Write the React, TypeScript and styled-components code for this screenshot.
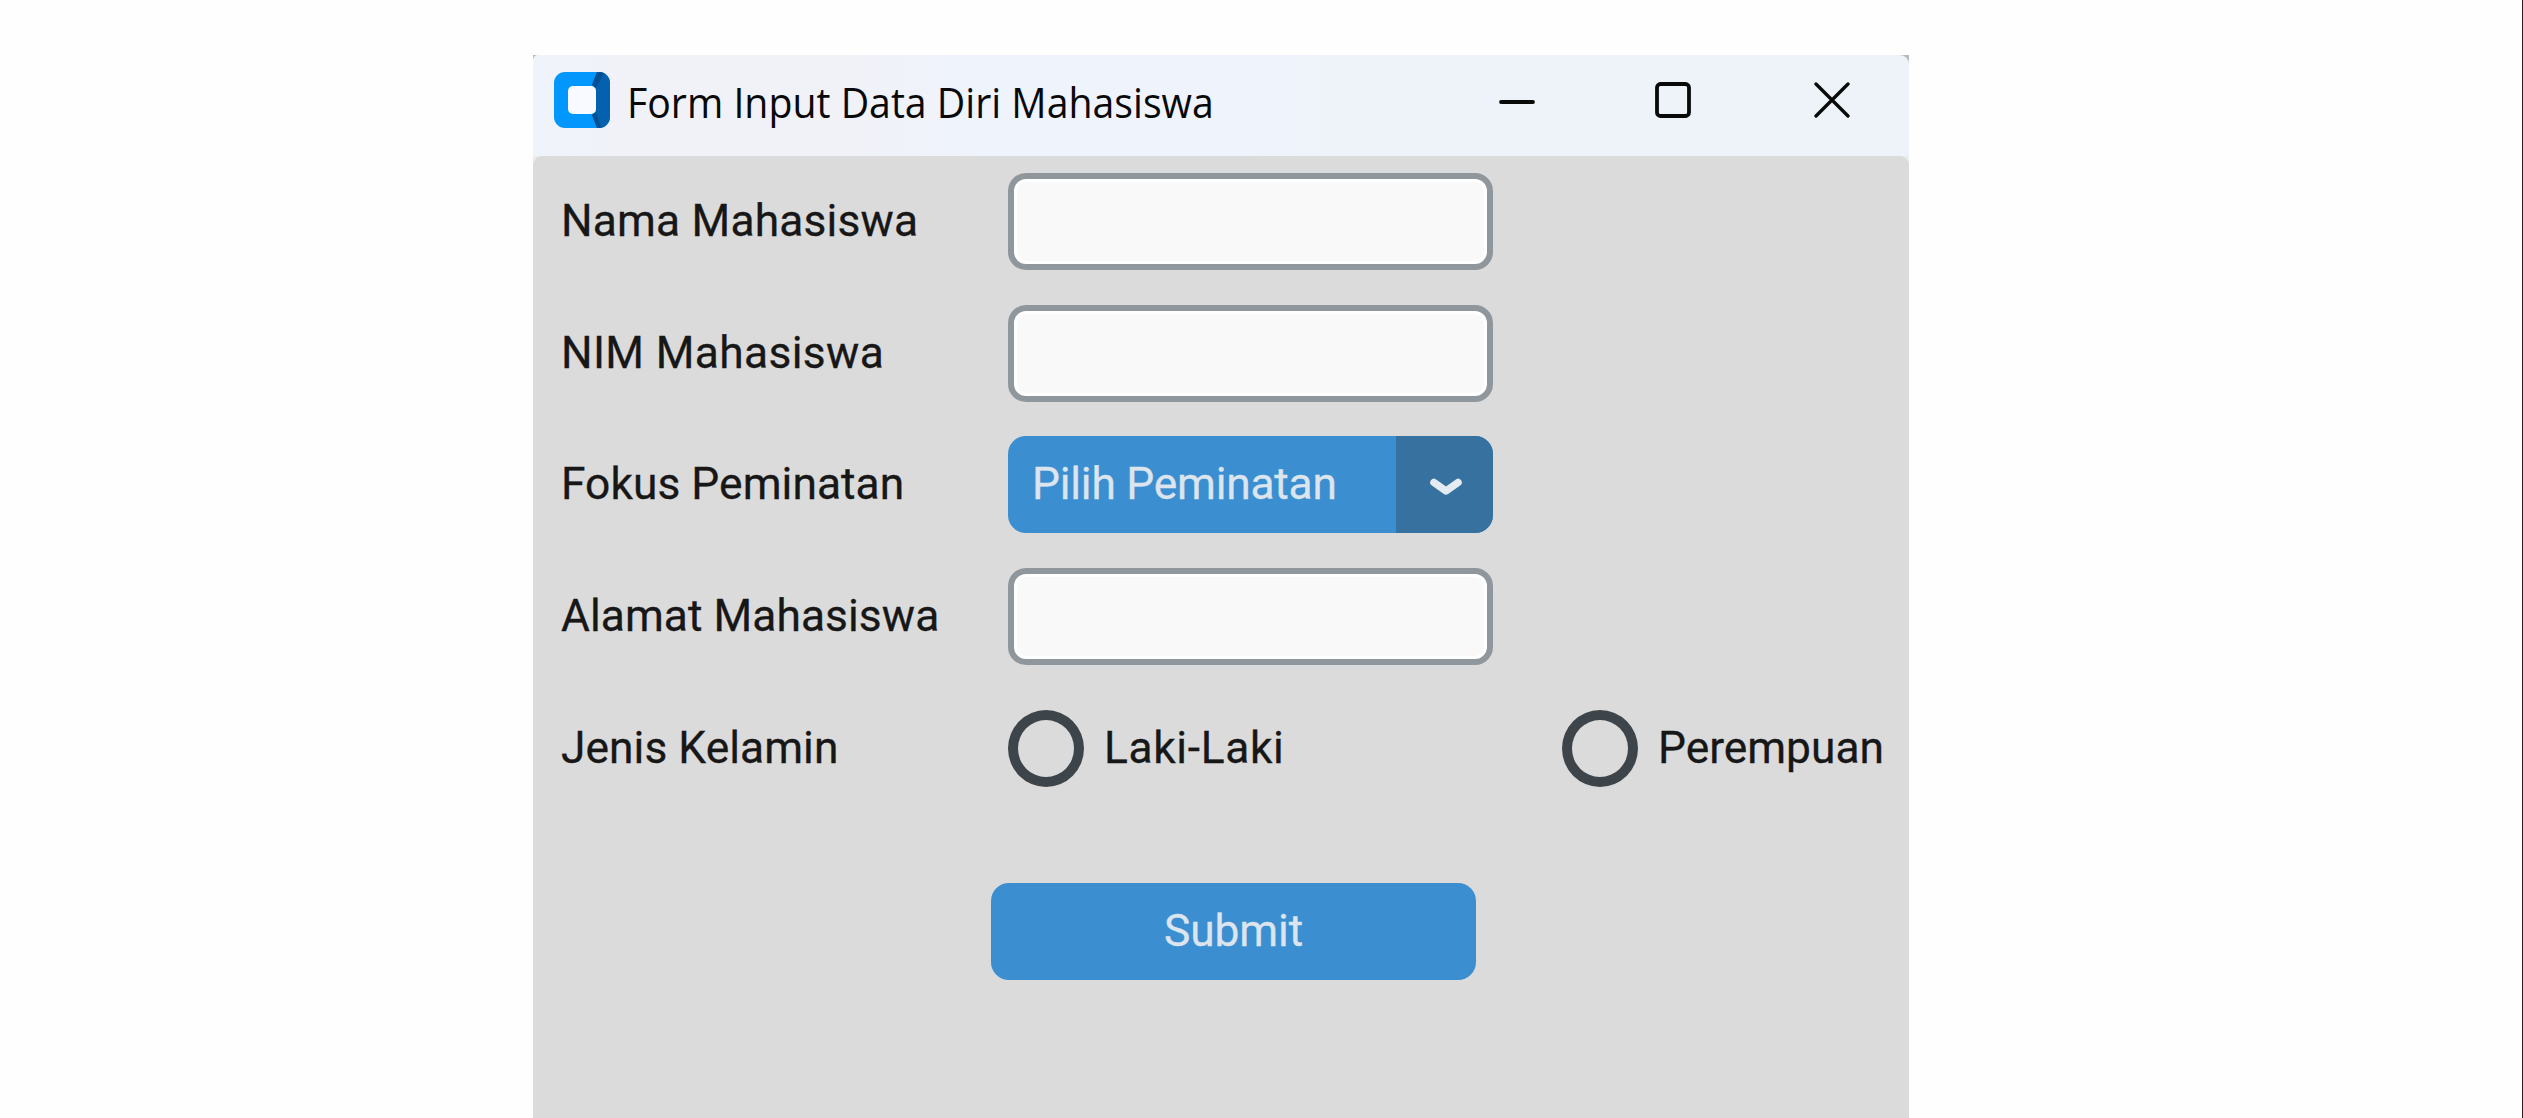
import React from 'react';
import styled, { createGlobalStyle } from 'styled-components';

const GlobalStyle = createGlobalStyle`
  *, *::before { box-sizing: border-box; }
  body { margin: 0; background: #fefefe; overflow: hidden; }
`;

const Page = styled.main`
  height: 1118px;
  padding: 55px 0 0 533px;
  border-right: 1px solid #242424;
  background: #fefefe;
  overflow: hidden;
`;

const Window = styled.section`
  display: flex;
  flex-direction: column;
  width: 1376px;
  height: 1063px;
  background: linear-gradient(#b9b9ba 0 20px, #ebedef 20px 120px, #dbdbdb 120px);
`;

const TitleBar = styled.header`
  display: flex;
  align-items: center;
  flex: none;
  height: 101px;
  padding-left: 21px;
  border-radius: 5px 9px 0 0;
  background: linear-gradient(90deg, #eff3fa 0, #f1f2f8 110px, #f1f2f8 300px, #eff3fb 440px, #eff3fb 720px, #edf3f8 980px, #edf3f8 100%);
`;

const AppIcon = styled.svg`
  flex: none;
  width: 56px;
  height: 56px;
  margin: 0 17px 11px 0;
`;

const Title = styled.h1`
  flex: 1;
  margin: 0;
  padding-bottom: 7px;
  font: 400 42.5px/56px "Open Sans", "Segoe UI", sans-serif;
  white-space: nowrap;
  color: #090909;
  transform: scaleX(0.923);
  transform-origin: left;
`;

const Controls = styled.div`
  display: flex;
  padding: 0 59px 11px 0;
`;

const ControlIcon = styled.svg<{ $gap?: number }>`
  width: 36px;
  height: 36px;
  margin-left: ${(p) => p.$gap ?? 0}px;
  fill: none;
  stroke: #090909;
  stroke-width: 3.8;
  stroke-linecap: round;
`;

const Form = styled.form`
  flex: 1;
  padding: 17px 0 0 28px;
  border-radius: 9px 9px 0 0;
  background: #dbdbdb;
  font-family: Roboto, sans-serif;
  font-size: 44.3px;
  line-height: 52px;
  color: #171717;
  -webkit-text-stroke: 0.3px currentColor;
`;

const Fields = styled.div`
  display: grid;
  grid-template-columns: 447px 554px 1fr;
  grid-auto-rows: 97px;
  row-gap: 34.7px;
  align-items: center;
`;

const Label = styled.label<{ $spacing?: number }>`
  grid-column: 1;
  padding-bottom: 1px;
  letter-spacing: ${(p) => p.$spacing ?? 0}px;
  white-space: nowrap;
`;

const Entry = styled.input`
  width: 485px;
  height: 97px;
  padding: 0 20px;
  border: 6px solid #8f969c;
  border-radius: 18px;
  background: #f9f9f9;
  box-shadow: inset 0 0 0 3px #fff;
  outline: none;
  font: inherit;
`;

const Select = styled.button`
  display: flex;
  align-items: stretch;
  width: 485px;
  height: 97px;
  padding: 0;
  border: 0;
  border-radius: 18px;
  background: #3b8ed0;
  overflow: hidden;
  font: inherit;
  color: #dce4ee;
`;

const SelectText = styled.span`
  flex: 1;
  padding: 22px 0 0 24px;
  text-align: left;
  letter-spacing: -0.22px;
  white-space: nowrap;
`;

const SelectArrow = styled.span`
  display: flex;
  width: 97px;
  align-items: center;
  justify-content: center;
  background: #36719f;
`;

const Chevron = styled.svg`
  width: 34px;
  height: 20px;
  margin: 4px 0 0 3px;
`;

const Radio = styled.label<{ $spacing: number }>`
  display: flex;
  align-items: center;
  gap: 20px;
  letter-spacing: ${(p) => p.$spacing}px;
  white-space: nowrap;

  &::before {
    content: '';
    flex: none;
    width: 76px;
    height: 77px;
    border: 10px solid #3e454a;
    border-radius: 50%;
    margin-top: 1px;
  }
`;

const RadioText = styled.span`
  padding-bottom: 1px;
`;

const Submit = styled.button`
  display: block;
  width: 485px;
  height: 97px;
  margin: 86px 0 0 430px;
  padding: 0 0 1px;
  border: 0;
  border-radius: 18px;
  background: #3b8ed0;
  font: inherit;
  letter-spacing: -0.1px;
  color: #dce4ee;
`;

export default function App() {
  return (
    <>
      <GlobalStyle />
      <Page>
        <Window>
          <TitleBar>
            <AppIcon viewBox="0 0 56 56">
              <rect width="56" height="56" rx="11" fill="#0297fc" />
              <path d="M43 0h2a11 11 0 0 1 11 11v34a11 11 0 0 1-11 11h-2l-5-13 4-3V16l-4-3z" fill="#0560ad" />
              <path d="M43 0h2a11 11 0 0 1 5 1.200L42 16l-4-3zM42 40l-4 3 5 13h2a11 11 0 0 0 2-.2z" fill="#034f93" />
              <rect x="14" y="14" width="28" height="28" rx="5" fill="#f9faff" />
            </AppIcon>
            <Title>Form Input Data Diri Mahasiswa</Title>
            <Controls>
              <ControlIcon viewBox="0 0 36 36"><path d="M2 20h32" /></ControlIcon>
              <ControlIcon viewBox="0 0 36 36" $gap={120}><rect x="2" y="2" width="32" height="32" rx="3.500" /></ControlIcon>
              <ControlIcon viewBox="0 0 36 36" $gap={123}><path d="m2 2 32 32M34 2 2 34" strokeWidth="3.300" /></ControlIcon>
            </Controls>
          </TitleBar>
          <Form>
            <Fields>
              <Label htmlFor="nama" $spacing={0.18}>Nama Mahasiswa</Label>
              <Entry id="nama" />
              <Label htmlFor="nim" $spacing={0.36}>NIM Mahasiswa</Label>
              <Entry id="nim" />
              <Label htmlFor="fokus" $spacing={0.06}>Fokus Peminatan</Label>
              <Select id="fokus" type="button">
                <SelectText>Pilih Peminatan</SelectText>
                <SelectArrow>
                  <Chevron viewBox="0 0 34 20">
                    <path d="M5 5.500 17 14 29 5.500" fill="none" stroke="#e4ebf3" strokeWidth="7.500" strokeLinecap="round" strokeLinejoin="round" />
                  </Chevron>
                </SelectArrow>
              </Select>
              <Label htmlFor="alamat" $spacing={0.06}>Alamat Mahasiswa</Label>
              <Entry id="alamat" />
              <Label as="span" $spacing={0.06}>Jenis Kelamin</Label>
              <Radio $spacing={0.65}><RadioText>Laki-Laki</RadioText></Radio>
              <Radio $spacing={0}><RadioText>Perempuan</RadioText></Radio>
            </Fields>
            <Submit type="button">Submit</Submit>
          </Form>
        </Window>
      </Page>
    </>
  );
}
